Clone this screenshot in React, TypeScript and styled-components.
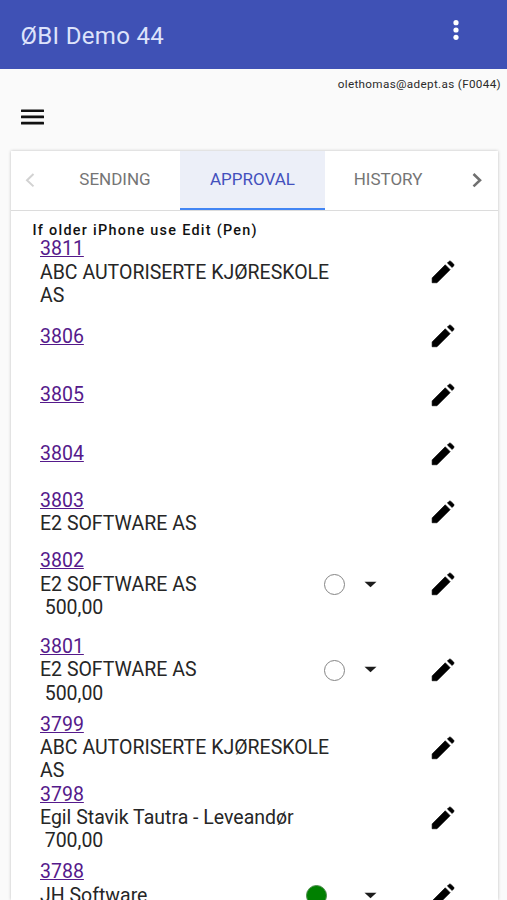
import React from 'react';
import styled, { createGlobalStyle } from 'styled-components';

const GlobalStyle = createGlobalStyle`
  * { box-sizing: border-box; }
  html, body { margin: 0; background: #fafafa; }
  body { height: 900px; overflow: hidden; font-family: Roboto, "Liberation Sans", sans-serif; color: #212121; }
`;

const Screen = styled.div`
  height: 900px;
  overflow: hidden;
  display: flex;
  flex-direction: column;
`;

const AppBar = styled.header`
  height: 69px;
  flex: none;
  display: flex;
  align-items: center;
  justify-content: space-between;
  padding: 0 40.5px 0 20.5px;
  background: #3f51b5;
`;

const Title = styled.h1`
  margin: 2px 0 0;
  font-size: 24px;
  font-weight: 400;
  line-height: 30px;
  letter-spacing: 0.32px;
  color: #dde3fb;
`;

const BareButton = styled.button`
  display: flex;
  align-items: center;
  justify-content: center;
  border: 0;
  padding: 0;
  background: none;
  color: inherit;
`;

const MoreButton = styled(BareButton)`
  width: 22px;
  height: 30px;
  margin-bottom: 9px;
`;

const Account = styled.div`
  flex: none;
  height: 29px;
  padding: 7px 6px 0 0;
  text-align: right;
  font-size: 11.7px;
  line-height: 16px;
  letter-spacing: 0.34px;
  color: #2b2b2b;
`;

const MenuBar = styled.nav`
  flex: none;
  height: 53px;
  padding: 4px 0 0 18px;
`;

const MenuButton = styled(BareButton)`
  width: 29px;
  height: 30px;
`;

const Card = styled.main`
  flex: 1;
  min-height: 0;
  overflow: hidden;
  margin: 0 9.5px 0 10.5px;
  background: #fff;
  box-shadow: 0 0 3px rgba(0, 0, 0, 0.24);
  display: flex;
  flex-direction: column;
`;

const Tabs = styled.div`
  flex: none;
  height: 60px;
  display: grid;
  grid-template-columns: 39.5px 130px 145px 126px 1fr;
  border-bottom: 1px solid #dcdcdc;
`;

const Tab = styled.button<{ $active?: boolean }>`
  border: 0;
  padding: 0 0 4px;
  font-family: inherit;
  font-size: 17px;
  line-height: 20px;
  color: ${(p) => (p.$active ? '#4350bd' : '#757575')};
  background: ${(p) => (p.$active ? '#eceff8' : 'transparent')};
  box-shadow: ${(p) => (p.$active ? 'inset 0 -2px #4285f4' : 'none')};
`;

const Arrow = styled(BareButton)<{ $disabled?: boolean }>`
  color: ${(p) => (p.$disabled ? '#d2d2d2' : '#707070')};
  padding-bottom: 1px;
  padding-left: ${(p) => (p.$disabled ? '0' : '5px')};
`;

const Hint = styled.p`
  flex: none;
  margin: 0;
  height: 26.3px;
  padding: 10px 0 0 22px;
  font-size: 14.4px;
  font-weight: 500;
  line-height: 20px;
  letter-spacing: 1.28px;
  color: #111;
`;

const Row = styled.div<{ $height: number }>`
  flex: none;
  height: ${(p) => p.$height}px;
  display: grid;
  grid-template-columns: 300px 24px 52px 1fr;
  align-items: center;
  padding-left: 29.5px;
`;

const Details = styled.div`
  font-size: 19.5px;
  line-height: 23.3px;
  color: #262626;
`;

const DocLink = styled.a`
  display: block;
  width: fit-content;
  color: #551a8b;
  text-decoration: underline;
  text-decoration-thickness: 1px;
`;

const Amount = styled.div`
  padding-left: 4.7px;
`;

const Status = styled.span<{ $approved?: boolean }>`
  justify-self: end;
  width: 21px;
  height: 21px;
  margin: 1px ${(p) => (p.$approved ? '37px' : '19px')} 0 0;
  border: 1px solid ${(p) => (p.$approved ? '#4c8b4c' : '#858585')};
  border-radius: 50%;
  background: ${(p) => (p.$approved ? '#008000' : '#fff')};
`;

const EditButton = styled(BareButton)`
  grid-column: 4;
  width: 30px;
  height: 30px;
  margin-left: 12px;
`;

const Caret = styled.svg`
  grid-column: 3;
  display: block;
`;

type Entry = {
  id: string;
  height: number;
  name?: string;
  amount?: string;
  status?: 'open' | 'approved';
};

const entries: Entry[] = [
  { id: '3811', height: 69.9, name: 'ABC AUTORISERTE KJØRESKOLE AS' },
  { id: '3806', height: 58.6 },
  { id: '3805', height: 58.6 },
  { id: '3804', height: 58.6 },
  { id: '3803', height: 58.6, name: 'E2 SOFTWARE AS' },
  { id: '3802', height: 85.6, name: 'E2 SOFTWARE AS', amount: '500,00', status: 'open' },
  { id: '3801', height: 85.6, name: 'E2 SOFTWARE AS', amount: '500,00', status: 'open' },
  { id: '3799', height: 69.9, name: 'ABC AUTORISERTE KJØRESKOLE AS' },
  { id: '3798', height: 69.9, name: 'Egil Stavik Tautra - Leveandør', amount: '700,00' },
  { id: '3788', height: 85.6, name: 'JH Software', amount: '\u00a0', status: 'approved' },
];

const Pencil = () => (
  <svg width="30" height="30" viewBox="0 0 24 24" fill="#000" stroke="#000" strokeWidth="0.5" strokeLinejoin="round">
    <path d="M3.3 16.7V20.6h3.9L17.7 10.1l-3.9-3.9zM20.5 7.1a1.1 1.1 0 0 0 0-1.5l-2.2-2.1a1.1 1.1 0 0 0-1.5 0l-1.3 1.3 3.8 3.6z" />
  </svg>
);

const Chevron = ({ left }: { left?: boolean }) => (
  <svg width="12" height="16" viewBox="0 0 12 16" fill="none" stroke="currentColor" strokeWidth={left ? 2 : 2.6}>
    <path d={left ? 'M9.5 2 3 8.2l6.5 6.2' : 'M2.5 2 9 8.2l-6.5 6.2'} />
  </svg>
);

export default function App() {
  return (
    <>
      <GlobalStyle />
      <Screen>
        <AppBar>
          <Title>ØBI Demo 44</Title>
          <MoreButton aria-label="More">
            <svg width="6" height="22" viewBox="0 0 6 22" fill="#fff">
              <circle cx="3" cy="3.7" r="2.6" />
              <circle cx="3" cy="11" r="2.6" />
              <circle cx="3" cy="18.3" r="2.6" />
            </svg>
          </MoreButton>
        </AppBar>
        <Account>olethomas@adept.as (F0044)</Account>
        <MenuBar>
          <MenuButton aria-label="Menu">
            <svg width="23" height="16" viewBox="0 0 23 16" fill="#111">
              <rect y="0.4" width="23" height="2.6" rx="0.5" />
              <rect y="6.6" width="23" height="2.6" rx="0.5" />
              <rect y="12.8" width="23" height="2.6" rx="0.5" />
            </svg>
          </MenuButton>
        </MenuBar>
        <Card>
          <Tabs>
            <Arrow $disabled aria-label="Previous tabs"><Chevron left /></Arrow>
            <Tab>SENDING</Tab>
            <Tab $active>APPROVAL</Tab>
            <Tab>HISTORY</Tab>
            <Arrow aria-label="Next tabs"><Chevron /></Arrow>
          </Tabs>
          <Hint>If older iPhone use Edit (Pen)</Hint>
          {entries.map((e) => (
            <Row key={e.id} $height={e.height}>
              <Details>
                <DocLink href="#">{e.id}</DocLink>
                {e.name && <div>{e.name}</div>}
                {e.amount && <Amount>{e.amount}</Amount>}
              </Details>
              {e.status && <Status $approved={e.status === 'approved'} />}
              {e.status && (
                <Caret width="13" height="7" viewBox="0 0 13 7" fill="#1c1c1c">
                  <path d="M0.5 0.8h12l-6 5.4z" />
                </Caret>
              )}
              <EditButton aria-label={`Edit ${e.id}`}><Pencil /></EditButton>
            </Row>
          ))}
        </Card>
      </Screen>
    </>
  );
}
